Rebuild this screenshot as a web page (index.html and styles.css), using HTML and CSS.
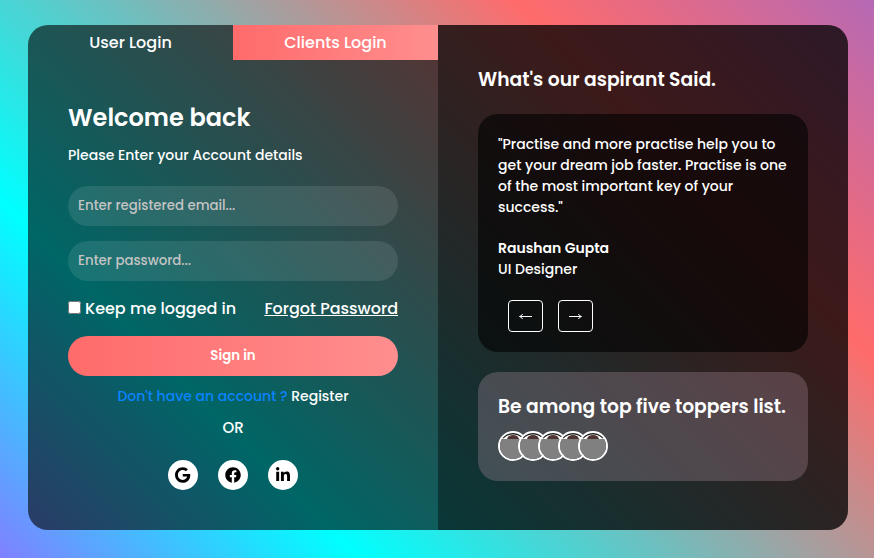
FILE: index.html
```html
<!DOCTYPE html>
<html lang="en">
<head>
<meta charset="utf-8">
<meta name="viewport" content="width=device-width, initial-scale=1">
<title>Login</title>
<link rel="stylesheet" href="styles.css">
</head>
<body>
<main class="card">
  <section class="login">
    <div class="tabs">
      <button class="tab" type="button">User Login</button>
      <button class="tab tab-active" type="button">Clients Login</button>
    </div>
    <form class="form">
      <h1 class="title">Welcome back</h1>
      <p class="subtitle">Please Enter your Account details</p>
      <input class="field" type="email" aria-label="Email" placeholder="Enter registered email...">
      <input class="field" type="password" aria-label="Password" placeholder="Enter password...">
      <div class="options">
        <label class="keep" for="keep"><input class="check" type="checkbox" id="keep">Keep me logged in</label>
        <a class="forgot" href="#">Forgot Password</a>
      </div>
      <button class="submit" type="submit">Sign in</button>
      <p class="register"><span class="question">Don't have an account ?</span> <a class="register-link" href="#">Register</a></p>
      <p class="or">OR</p>
      <div class="socials">
        <a class="social" href="#" aria-label="Google">
          <svg class="icon" viewBox="0 0 488 512"><path d="M488 261.800C488 403.300 391.100 504 248 504 110.800 504 0 393.200 0 256S110.800 8 248 8c66.800 0 123 24.500 166.300 64.900l-67.500 64.900C258.500 52.600 94.300 116.600 94.300 256c0 86.500 69.100 156.600 153.700 156.600 98.200 0 135-70.400 140.800-106.900H248v-85.300h236.100c2.300 12.700 3.900 24.900 3.900 41.400z"/></svg>
        </a>
        <a class="social" href="#" aria-label="Facebook">
          <svg class="icon" viewBox="0 0 512 512"><path d="M504 256C504 119 393 8 256 8S8 119 8 256c0 123.780 90.690 226.380 209.250 245V327.690h-63V256h63v-54.640c0-62.150 37-96.480 93.670-96.480 27.140 0 55.520 4.840 55.520 4.840v61h-31.280c-30.800 0-40.410 19.120-40.410 38.730V256h68.780l-11 71.690h-57.780V501C413.310 482.380 504 379.780 504 256z"/></svg>
        </a>
        <a class="social" href="#" aria-label="LinkedIn">
          <svg class="icon" viewBox="0 0 448 512"><path d="M100.280 448H7.400V148.900h92.880zM53.790 108.100C24.090 108.100 0 83.500 0 53.800a53.790 53.790 0 0 1 107.580 0c0 29.700-24.100 54.300-53.790 54.300zM447.900 448h-92.680V302.400c0-34.700-.7-79.200-48.290-79.200-48.290 0-55.690 37.700-55.690 76.700V448h-92.780V148.900h89.080v40.800h1.300c12.400-23.500 42.690-48.300 87.880-48.300 94 0 111.280 61.900 111.280 142.300V448z"/></svg>
        </a>
      </div>
    </form>
  </section>
  <section class="aside">
    <h3 class="heading">What's our aspirant Said.</h3>
    <article class="quote">
      <p class="quote-text">"Practise and more practise help you to get your dream job faster. Practise is one of the most important key of your success."</p>
      <p class="author">Raushan Gupta</p>
      <p class="role">UI Designer</p>
      <div class="arrows">
        <button class="arrow" type="button" aria-label="Previous"><svg class="arrow-icon" viewBox="0 0 13 8"><path d="M13 4.500H.8M3.600 2Q2.800 4 .5 4.500Q2.800 5 3.600 7"/></svg></button>
        <button class="arrow" type="button" aria-label="Next"><svg class="arrow-icon" viewBox="0 0 13 8"><path d="M0 4.500H12.200M9.400 2Q10.200 4 12.500 4.500Q10.200 5 9.400 7"/></svg></button>
      </div>
    </article>
    <article class="toppers">
      <h3 class="heading">Be among top five toppers list.</h3>
      <div class="avatars">
        <svg class="avatar" viewBox="0 0 26 26"><g id="face"><path fill="#fff" d="M0 0h26v6H0z"/><path fill="none" stroke="#1c1c1c" stroke-width="1.400" d="M3 5Q7 .7 13 .7T23 5"/><path fill="#4d3331" d="M7 6Q8 2 13 2T19 6z"/><path fill="#808080" d="M0 6h26v20H0z"/></g></svg>
        <svg class="avatar" viewBox="0 0 26 26"><use href="#face"/></svg>
        <svg class="avatar" viewBox="0 0 26 26"><use href="#face"/></svg>
        <svg class="avatar" viewBox="0 0 26 26"><use href="#face"/></svg>
        <svg class="avatar" viewBox="0 0 26 26"><use href="#face"/></svg>
      </div>
    </article>
  </section>
</main>
</body>
</html>
```
FILE: styles.css
```css
* {
  box-sizing: border-box;
  margin: 0;
  padding: 0;
}

body {
  min-height: 100vh;
  display: flex;
  align-items: center;
  justify-content: center;
  padding: 25px 26px 28px 28px;
  background: linear-gradient(45deg, #8080ff 0%, #00ffff 25%, #ff6b6b 75%, #b569b5 100%);
  font-family: Poppins, Inter, sans-serif;
  font-weight: 500;
  color: #fff;
}

button,
input {
  font-family: inherit;
  font-weight: inherit;
  color: inherit;
  border: 0;
}

a {
  color: inherit;
}

.card {
  width: 100%;
  max-width: 820px;
  display: grid;
  grid-template-columns: 1fr 1fr;
  border-radius: 20px;
  overflow: hidden;
  background: rgba(0, 0, 0, 0.6);
}

.tabs {
  display: grid;
  grid-template-columns: 1fr 1fr;
}

.tab {
  height: 35px;
  background: none;
  font-size: 16px;
}

.tab-active,
.submit {
  background: linear-gradient(to right, #ff6b6b, #ff8e8e);
}

.form {
  display: flex;
  flex-direction: column;
  padding: 40px;
}

.title {
  font-size: 24px;
  line-height: 36px;
  font-weight: 600;
}

.subtitle {
  margin: 8px 0 20px;
  font-size: 14px;
  line-height: 22px;
}

.field {
  width: 100%;
  height: 40px;
  margin-bottom: 15px;
  padding: 0 10px;
  border-radius: 20px;
  background: rgba(255, 255, 255, 0.1);
}

.field::placeholder {
  color: #c4c4c4;
}

.options {
  display: flex;
  justify-content: space-between;
  line-height: 26px;
}

.check {
  width: 13px;
  height: 13px;
  margin-right: 4px;
}

.submit {
  height: 40px;
  margin: 14px 0 8px;
  border-radius: 20px;
  font-weight: 600;
}

.register,
.or {
  text-align: center;
  font-size: 14px;
  line-height: 24px;
}

.question {
  color: #0a84ff;
}

.register-link {
  text-decoration: none;
}

.or {
  margin: 8px 0 20px;
  font-size: 15px;
}

.socials {
  display: flex;
  justify-content: center;
  gap: 20px;
}

.social {
  width: 30px;
  height: 30px;
  display: flex;
  align-items: center;
  justify-content: center;
  border-radius: 50%;
  background: #fff;
}

.icon {
  height: 16px;
  fill: #000;
}

.aside {
  padding: 40px;
  background: rgba(0, 0, 0, 0.4);
}

.heading {
  line-height: 29px;
  font-weight: 600;
}

.quote {
  margin: 20px 0;
  padding: 20px;
  border-radius: 20px;
  background: rgba(0, 0, 0, 0.6);
  font-size: 14px;
  line-height: 21px;
}

.author {
  margin-top: 20px;
  font-weight: 600;
}

.arrows {
  display: flex;
  gap: 15px;
  margin-top: 20px;
  padding-left: 10px;
}

.arrow {
  width: 35px;
  height: 32px;
  display: flex;
  align-items: center;
  justify-content: center;
  border: 1px solid #fff;
  border-radius: 4px;
  background: none;
}

.arrow-icon {
  width: 13px;
  height: 8px;
  fill: none;
  stroke: #fff;
}

.toppers {
  padding: 20px;
  border-radius: 20px;
  background: rgba(178, 148, 165, 0.3);
}

.avatars {
  display: flex;
  margin-top: 10px;
}

.avatar {
  width: 30px;
  height: 30px;
  border: 2px solid #fff;
  border-radius: 50%;
}

.avatar + .avatar {
  margin-left: -10px;
}
```
